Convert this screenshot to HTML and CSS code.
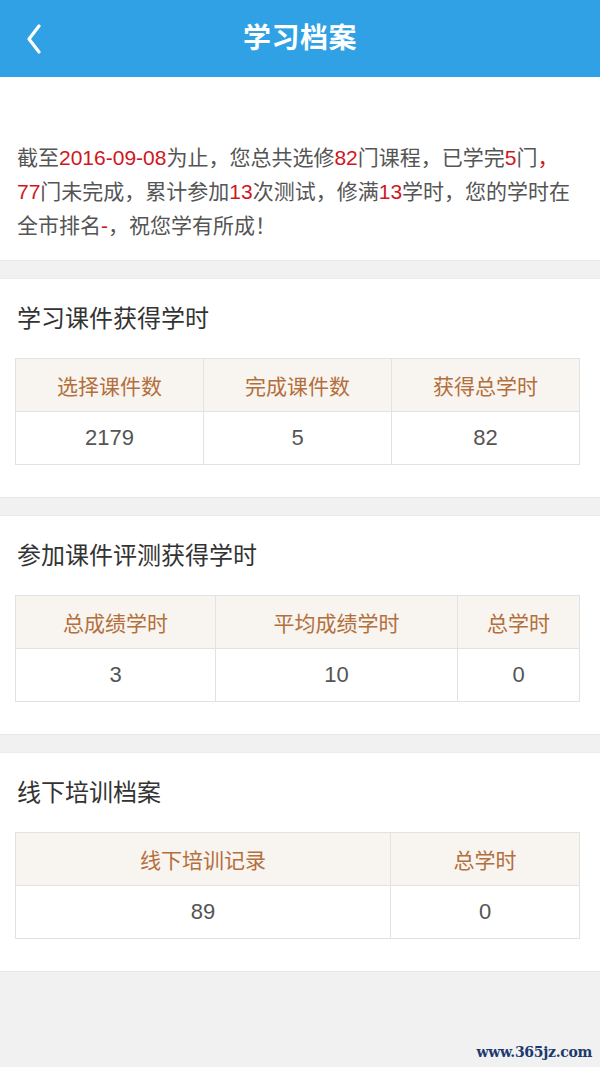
FILE: index.html
```html
<!DOCTYPE html>
<html lang="zh-CN">
<head>
<meta charset="utf-8">
<title>学习档案</title>
<link rel="stylesheet" href="styles.css">
</head>
<body>
<div class="page">
  <header class="topbar">
    <span class="back" aria-label="返回">
      <svg width="16" height="30" viewBox="0 0 16 30"><polyline points="13,2 3,15 13,28" fill="none" stroke="#fff" stroke-width="3.2" stroke-linecap="round" stroke-linejoin="round"/></svg>
    </span>
    <h1 class="title">学习档案</h1>
  </header>

  <section class="intro">
    <p>截至<em>2016-09-08</em>为止，您总共选修<em>82</em>门课程，已学完<em>5</em>门<em>，</em><br><em>77</em>门未完成，累计参加<em>13</em>次测试，修满<em>13</em>学时，您的学时在<br>全市排名<em>-</em>，祝您学有所成！</p>
  </section>

  <section class="card">
    <h2 class="card-title">学习课件获得学时</h2>
    <div class="tbl cols-3eq">
      <div class="th">选择课件数</div>
      <div class="th">完成课件数</div>
      <div class="th">获得总学时</div>
      <div class="td">2179</div>
      <div class="td">5</div>
      <div class="td">82</div>
    </div>
  </section>

  <section class="card">
    <h2 class="card-title">参加课件评测获得学时</h2>
    <div class="tbl cols-eval">
      <div class="th">总成绩学时</div>
      <div class="th">平均成绩学时</div>
      <div class="th">总学时</div>
      <div class="td">3</div>
      <div class="td">10</div>
      <div class="td">0</div>
    </div>
  </section>

  <section class="card">
    <h2 class="card-title">线下培训档案</h2>
    <div class="tbl cols-offline">
      <div class="th">线下培训记录</div>
      <div class="th">总学时</div>
      <div class="td">89</div>
      <div class="td">0</div>
    </div>
  </section>

  <div class="watermark">www.365jz.com</div>
</div>
</body>
</html>
```

FILE: styles.css
```css
html, body {
  margin: 0;
  padding: 0;
  background: #f1f1f1;
}
body {
  font-family: "Liberation Sans", "Noto Sans CJK SC", sans-serif;
  color: #4d4d4d;
}
.page {
  position: relative;
  width: 600px;
  min-height: 1067px;
  background: #f1f1f1;
}
.topbar {
  height: 77px;
  background: #2fa1e4;
  display: flex;
  align-items: center;
  justify-content: center;
  position: relative;
}
.back {
  position: absolute;
  left: 26px;
  top: 24px;
  display: block;
  line-height: 0;
}
.title {
  margin: 0;
  color: #fff;
  font-size: 28px;
  font-weight: 600;
  letter-spacing: 0.5px;
  line-height: 1;
}
.intro {
  background: #fff;
  padding: 64px 10px 17px 17px;
  border-bottom: 1px solid #e6e6e6;
}
.intro p {
  margin: 0;
  font-size: 21px;
  line-height: 34px;
  color: #555;
  white-space: nowrap;
}
.intro em {
  font-style: normal;
  color: #d0161e;
}
.card {
  background: #fff;
  margin-top: 17px;
  padding: 22px 20px 32px 15px;
  border-top: 1px solid #ececec;
  border-bottom: 1px solid #e6e6e6;
}
.card-title {
  margin: 0 0 21px 2px;
  font-size: 24px;
  font-weight: normal;
  line-height: 36px;
  color: #333;
}
.tbl {
  display: grid;
  border-top: 1px solid #e2e2e2;
  border-left: 1px solid #e2e2e2;
}
.cols-3eq { grid-template-columns: 1fr 1fr 1fr; }
.cols-eval { grid-template-columns: 200px 242px 1fr; }
.cols-offline { grid-template-columns: 375px 1fr; }
.th, .td {
  box-sizing: border-box;
  height: 53px;
  display: flex;
  align-items: center;
  justify-content: center;
  border-right: 1px solid #e2e2e2;
  border-bottom: 1px solid #e2e2e2;
  font-size: 21px;
}
.th {
  background: #f8f4f0;
  color: #b36f3c;
}
.td {
  background: #fff;
  color: #555;
  font-size: 22px;
}
.watermark {
  position: absolute;
  right: 8px;
  bottom: 7px;
  font-family: "DejaVu Serif", serif;
  font-size: 14px;
  font-weight: bold;
  color: #1d3a6f;
  letter-spacing: -0.3px;
}
```
